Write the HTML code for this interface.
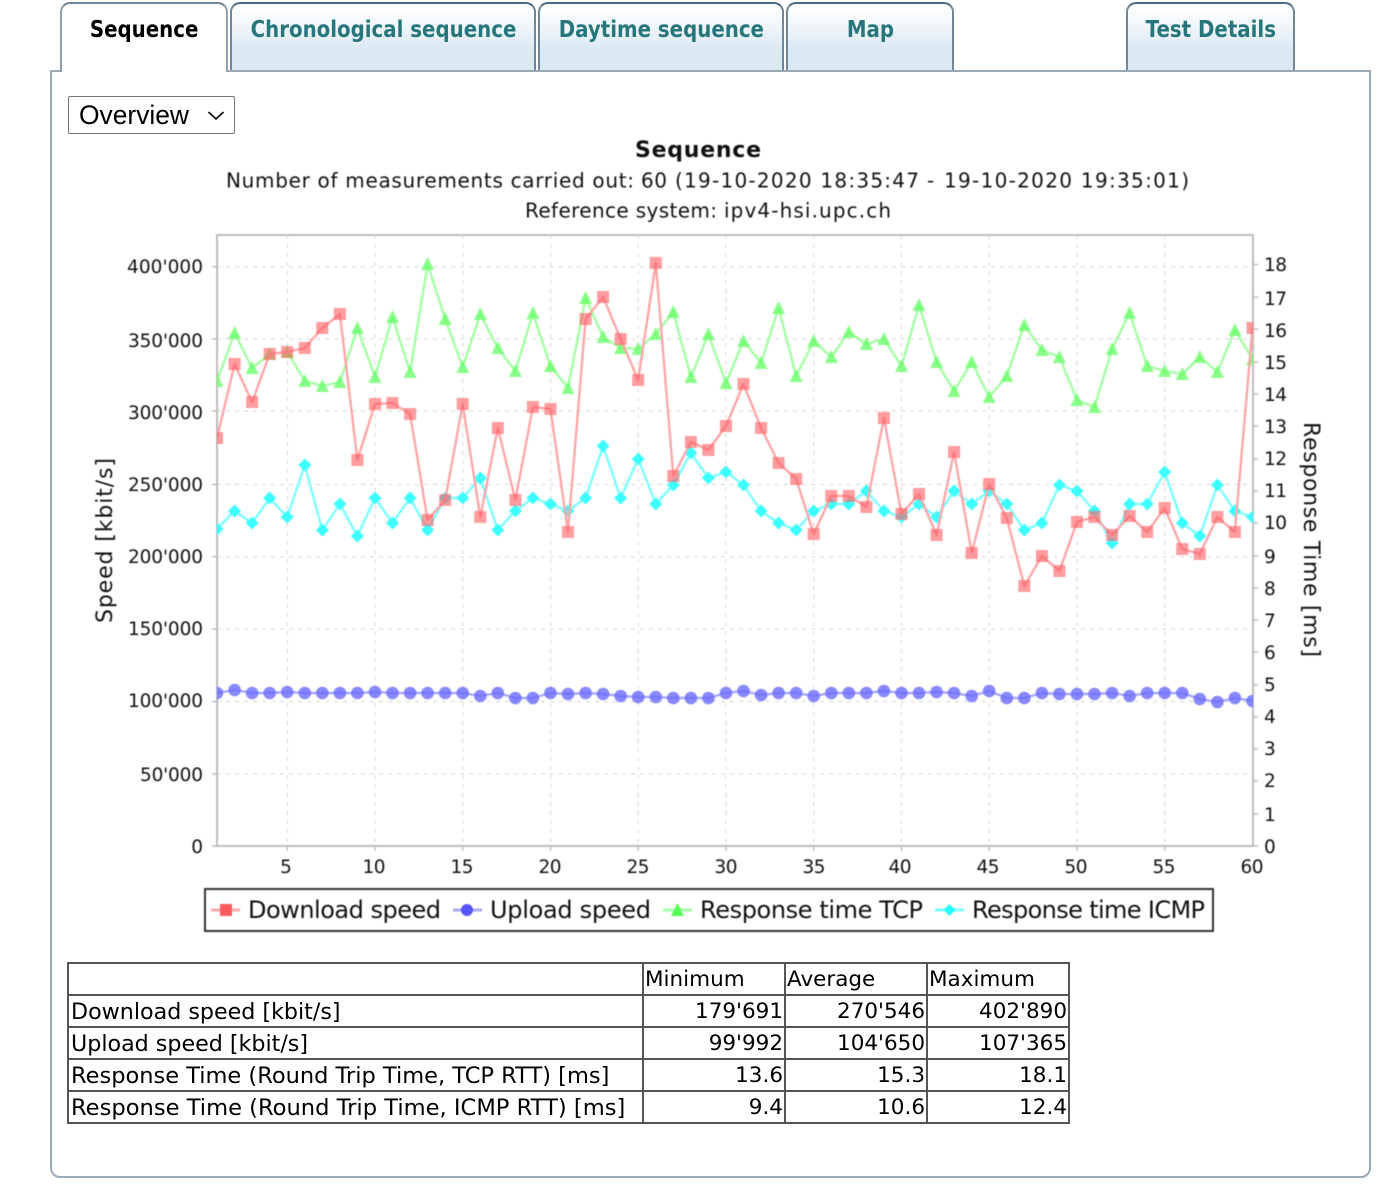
<!DOCTYPE html>
<html lang="en">
<head>
<meta charset="utf-8">
<title>Sequence</title>
<style>
html,body{margin:0;padding:0;background:#fff;width:1395px;height:1188px;overflow:hidden}
body{position:relative;font-family:"DejaVu Sans","Liberation Sans",sans-serif}
.panel{position:absolute;left:50px;top:70px;height:1104px;border:2px solid #9aa9b6;border-radius:0 0 10px 10px;background:#fff;box-sizing:content-box;width:1317px;z-index:1}
.tab{position:absolute;top:2px;height:68px;box-sizing:border-box;border:2px solid #6f8799;border-top-color:#4f6b82;border-bottom:0;border-radius:10px 10px 0 0;background:linear-gradient(#fff 0,#fff 6%,#dbe9f3 70%,#dbe9f3 100%);color:#26767b;font-weight:bold;font-size:23px;line-height:52px;text-align:center;white-space:nowrap}
.tab span{display:inline-block;transform:scaleX(.86);transform-origin:center;margin:0 -40px}
.tab.on{background:#fff;color:#000;border-color:#8ea0b0;border-top-color:#6f8799;height:70px;z-index:2}
select{position:absolute;z-index:2;left:68px;top:96px;width:167px;height:38px;box-sizing:border-box;font-family:"Liberation Sans",sans-serif;font-size:26.4px;color:#000;background:#fff;border:1px solid #767676;border-radius:2px;padding:0 0 0 10px;margin:0;appearance:none;-webkit-appearance:none}
svg.chev{position:absolute;z-index:3;left:206px;top:108px;pointer-events:none}
svg.chart{position:absolute;z-index:2;left:0;top:0;filter:blur(.55px)}
svg text{font-family:"DejaVu Sans","Liberation Sans",sans-serif;fill:#111}
table{position:absolute;z-index:2;left:67px;top:962px;width:1001px;border-collapse:collapse;table-layout:fixed;font-size:21.5px;color:#000}
td{border:2px solid #555;height:32px;padding:0 1px 0 2px;box-sizing:border-box;line-height:28px;white-space:nowrap;overflow:hidden;vertical-align:bottom}
td.h{padding-left:1px}
td.n{text-align:right;padding-right:1px}
</style>
</head>
<body>
<div class="tab on" style="left:60px;width:168px"><span>Sequence</span></div>
<div class="tab" style="left:230px;width:306px"><span>Chronological sequence</span></div>
<div class="tab" style="left:538px;width:246px"><span>Daytime sequence</span></div>
<div class="tab" style="left:786px;width:168px"><span>Map</span></div>
<div class="tab" style="left:1126px;width:169px"><span>Test Details</span></div>
<div class="panel"></div>

<select><option>Overview</option></select>
<svg class="chev" width="20" height="14" viewBox="0 0 20 14" xmlns="http://www.w3.org/2000/svg"><path d="M2.5 4 L10 11 L17.5 4" fill="none" stroke="#111" stroke-width="1.7"/></svg>

<svg class="chart" width="1395" height="1188" viewBox="0 0 1395 1188" xmlns="http://www.w3.org/2000/svg">
<defs>
<clipPath id="plot"><rect x="217" y="235" width="1036" height="611"/></clipPath>
<marker id="mr" markerUnits="userSpaceOnUse" markerWidth="16" markerHeight="16" refX="8" refY="8" overflow="visible"><rect x="2" y="2" width="12" height="12" fill="#ff5a5f" fill-opacity=".6"/></marker>
<marker id="mb" markerUnits="userSpaceOnUse" markerWidth="16" markerHeight="16" refX="8" refY="8" overflow="visible"><circle cx="8" cy="8" r="6.3" fill="#6a6aff" fill-opacity=".8"/></marker>
<marker id="mg" markerUnits="userSpaceOnUse" markerWidth="16" markerHeight="16" refX="8" refY="8" overflow="visible"><path d="M8 1 L14.5 14 L1.5 14 Z" fill="#6cff6c" fill-opacity=".8"/></marker>
<marker id="mc" markerUnits="userSpaceOnUse" markerWidth="16" markerHeight="16" refX="8" refY="8" overflow="visible"><path d="M8 1.5 L14.5 8 L8 14.5 L1.5 8 Z" fill="#3dffff"/></marker>
</defs>

<rect x="217" y="235" width="1036" height="611" fill="#fff"/>
<g stroke="#d4d4d4" stroke-width="1" stroke-dasharray="4 5" fill="none">
<path d="M217 266.7H1253M217 339H1253M217 411H1253M217 484.5H1253M217 556.7H1253M217 629H1253M217 701.5H1253M217 774H1253"/>
<path d="M287.2 235V846M375 235V846M462.7 235V846M550.5 235V846M638.2 235V846M726 235V846M813.7 235V846M901.5 235V846M989.2 235V846M1077 235V846M1164.7 235V846"/>
</g>
<g stroke="#bdbdbd" stroke-width="1.4" fill="none">
<path d="M212 266.7H217M212 339H217M212 411H217M212 484.5H217M212 556.7H217M212 629H217M212 701.5H217M212 774H217M212 846H217"/>
<path d="M1253 264.5H1258M1253 297H1258M1253 329H1258M1253 362H1258M1253 394H1258M1253 426H1258M1253 459H1258M1253 491H1258M1253 523H1258M1253 556H1258M1253 588H1258M1253 620H1258M1253 652H1258M1253 685H1258M1253 717H1258M1253 749H1258M1253 781H1258M1253 814H1258M1253 846H1258"/>
<path d="M287.2 846V851M375 846V851M462.7 846V851M550.5 846V851M638.2 846V851M726 846V851M813.7 846V851M901.5 846V851M989.2 846V851M1077 846V851M1164.7 846V851"/>
</g>
<rect x="217" y="235" width="1036" height="611" fill="none" stroke="#bdbdbd" stroke-width="2"/>

<g clip-path="url(#plot)" fill="none" stroke-width="2.4" stroke-linejoin="round">
<polyline stroke="#a4ffa4" marker-start="url(#mg)" marker-mid="url(#mg)" marker-end="url(#mg)" points="217,381 234.6,333 252.1,368 269.7,354 287.2,352 304.8,381 322.3,386 339.9,382 357.4,328 375,377 392.5,317 410.1,372 427.6,264 445.2,319 462.7,367 480.3,314 497.8,348 515.4,371 532.9,313 550.5,366 568,388 585.6,298 603.1,337 620.7,348 638.2,349 655.8,334 673.3,312 690.9,377 708.4,334 726,383 743.5,341 761.1,363 778.6,308 796.2,376 813.7,341 831.3,357 848.8,332 866.4,344 883.9,339 901.5,366 919,305 936.6,362 954.1,391 971.7,362 989.2,397 1006.8,376 1024.3,325 1041.9,350 1059.4,357 1077,400 1094.5,407 1112.1,349 1129.6,313 1147.2,366 1164.7,371 1182.3,374 1199.8,357 1217.4,372 1234.9,330 1252.5,359"/>
<polyline stroke="#7cffff" marker-start="url(#mc)" marker-mid="url(#mc)" marker-end="url(#mc)" points="217,529 234.6,511 252.1,523 269.7,498 287.2,517 304.8,465 322.3,530 339.9,504 357.4,536 375,498 392.5,523 410.1,498 427.6,530 445.2,498 462.7,498 480.3,478 497.8,530 515.4,511 532.9,498 550.5,504 568,511 585.6,498 603.1,446 620.7,498 638.2,459 655.8,504 673.3,485 690.9,453 708.4,478 726,472 743.5,485 761.1,511 778.6,523 796.2,530 813.7,511 831.3,504 848.8,504 866.4,491 883.9,511 901.5,517 919,504 936.6,517 954.1,491 971.7,504 989.2,491 1006.8,504 1024.3,530 1041.9,523 1059.4,485 1077,491 1094.5,511 1112.1,543 1129.6,504 1147.2,504 1164.7,472 1182.3,523 1199.8,536 1217.4,485 1234.9,511 1252.5,517"/>
<polyline stroke="#a8a8ff" marker-start="url(#mb)" marker-mid="url(#mb)" marker-end="url(#mb)" points="217,693 234.6,690 252.1,693 269.7,693 287.2,692 304.8,693 322.3,693 339.9,693 357.4,693 375,692 392.5,693 410.1,693 427.6,693 445.2,693 462.7,693 480.3,696 497.8,693 515.4,698 532.9,698 550.5,693 568,694 585.6,693 603.1,694 620.7,696 638.2,697 655.8,697 673.3,698 690.9,698 708.4,698 726,693 743.5,691 761.1,695 778.6,693 796.2,693 813.7,696 831.3,693 848.8,693 866.4,693 883.9,691 901.5,693 919,693 936.6,692 954.1,693 971.7,696 989.2,691 1006.8,698 1024.3,698 1041.9,693 1059.4,694 1077,694 1094.5,694 1112.1,693 1129.6,696 1147.2,693 1164.7,693 1182.3,693 1199.8,699 1217.4,702 1234.9,698 1252.5,701"/>
<polyline stroke="#ffa6a9" marker-start="url(#mr)" marker-mid="url(#mr)" marker-end="url(#mr)" points="217,438 234.6,364 252.1,402 269.7,354 287.2,352 304.8,348 322.3,328 339.9,314 357.4,460 375,404 392.5,403 410.1,414 427.6,520 445.2,500 462.7,404 480.3,517 497.8,428 515.4,500 532.9,407 550.5,409 568,532 585.6,319 603.1,297 620.7,339 638.2,380 655.8,263 673.3,476 690.9,442 708.4,450 726,426 743.5,384 761.1,428 778.6,463 796.2,479 813.7,534 831.3,496 848.8,496 866.4,507 883.9,418 901.5,514 919,494 936.6,535 954.1,452 971.7,553 989.2,484 1006.8,518 1024.3,586 1041.9,556 1059.4,571 1077,522 1094.5,517 1112.1,535 1129.6,516 1147.2,532 1164.7,508 1182.3,549 1199.8,554 1217.4,517 1234.9,532 1252.5,328"/>
</g>

<text x="698" y="157" font-size="22" font-weight="bold" text-anchor="middle" textLength="126">Sequence</text>
<g font-size="20">
<text x="226" y="187.5" textLength="408">Number of measurements carried out:</text>
<text x="641" y="187.5" textLength="26">60</text>
<text x="675" y="187.5" textLength="244">(19-10-2020 18:35:47</text>
<text x="927" y="187.5">-</text>
<text x="944" y="187.5" textLength="245">19-10-2020 19:35:01)</text>
<text x="525" y="217.5" textLength="192">Reference system:</text>
<text x="724" y="217.5" textLength="167">ipv4-hsi.upc.ch</text>
</g>

<g font-size="18.5" text-anchor="end">
<text x="203" y="273" textLength="76">400'000</text>
<text x="203" y="347" textLength="75">350'000</text>
<text x="203" y="419" textLength="75">300'000</text>
<text x="203" y="491" textLength="75">250'000</text>
<text x="203" y="563" textLength="75">200'000</text>
<text x="203" y="635" textLength="75">150'000</text>
<text x="203" y="707" textLength="75">100'000</text>
<text x="203" y="781" textLength="63">50'000</text>
<text x="203" y="853">0</text>
</g>
<g font-size="18.5">
<text x="1264" y="271" textLength="23">18</text>
<text x="1264" y="305" textLength="23">17</text>
<text x="1264" y="337" textLength="23">16</text>
<text x="1264" y="369" textLength="23">15</text>
<text x="1264" y="401" textLength="23">14</text>
<text x="1264" y="433" textLength="23">13</text>
<text x="1264" y="465" textLength="23">12</text>
<text x="1264" y="497" textLength="23">11</text>
<text x="1264" y="529" textLength="23">10</text>
<text x="1264" y="563">9</text>
<text x="1264" y="595">8</text>
<text x="1264" y="627">7</text>
<text x="1264" y="659">6</text>
<text x="1264" y="691">5</text>
<text x="1264" y="723">4</text>
<text x="1264" y="755">3</text>
<text x="1264" y="787">2</text>
<text x="1264" y="821">1</text>
<text x="1264" y="853">0</text>
</g>
<g font-size="18.5" text-anchor="middle">
<text x="286" y="873">5</text>
<text x="374" y="873" textLength="23">10</text>
<text x="462" y="873" textLength="23">15</text>
<text x="550" y="873" textLength="23">20</text>
<text x="638" y="873" textLength="23">25</text>
<text x="726" y="873" textLength="23">30</text>
<text x="814" y="873" textLength="23">35</text>
<text x="900" y="873" textLength="23">40</text>
<text x="988" y="873" textLength="23">45</text>
<text x="1076" y="873" textLength="23">50</text>
<text x="1164" y="873" textLength="23">55</text>
<text x="1252" y="873" textLength="23">60</text>
</g>

<text transform="translate(112,623) rotate(-90)" font-size="22" textLength="165">Speed [kbit/s]</text>
<text transform="translate(1304,422) rotate(90)" font-size="22" textLength="235">Response Time [ms]</text>

<rect x="205" y="889" width="1008" height="42" fill="#fff" stroke="#333" stroke-width="2"/>
<g font-size="24">
<text x="248" y="918" textLength="193">Download speed</text>
<text x="490" y="918" textLength="161">Upload speed</text>
<text x="700" y="918" textLength="223">Response time TCP</text>
<text x="972" y="918" textLength="233">Response time ICMP</text>
</g>
<path d="M211 910H240" stroke="#ffa6a9" stroke-width="3"/>
<rect x="220" y="904" width="12" height="12" fill="#ff5a5f"/>
<path d="M453 910H482" stroke="#a8a8ff" stroke-width="3"/>
<circle cx="467" cy="910" r="6" fill="#5555ff"/>
<path d="M663 910H692" stroke="#a4ffa4" stroke-width="3"/>
<path d="M677.5 903 L684 916 L671 916 Z" fill="#55ff55"/>
<path d="M935 910H964" stroke="#7cffff" stroke-width="3"/>
<path d="M949.5 904 L955.5 910 L949.5 916 L943.5 910 Z" fill="#22ffff"/>
</svg>

<table>
<colgroup><col style="width:575px"><col style="width:142px"><col style="width:142px"><col style="width:142px"></colgroup>
<tr><td></td><td class="h">Minimum</td><td class="h">Average</td><td class="h">Maximum</td></tr>
<tr><td style="font-size:22.2px">Download speed [kbit/s]</td><td class="n">179'691</td><td class="n">270'546</td><td class="n">402'890</td></tr>
<tr><td style="font-size:22.2px">Upload speed [kbit/s]</td><td class="n">99'992</td><td class="n">104'650</td><td class="n">107'365</td></tr>
<tr><td style="font-size:22.5px">Response Time (Round Trip Time, TCP RTT) [ms]</td><td class="n">13.6</td><td class="n">15.3</td><td class="n">18.1</td></tr>
<tr><td style="font-size:22.6px">Response Time (Round Trip Time, ICMP RTT) [ms]</td><td class="n">9.4</td><td class="n">10.6</td><td class="n">12.4</td></tr>
</table>
</body>
</html>
